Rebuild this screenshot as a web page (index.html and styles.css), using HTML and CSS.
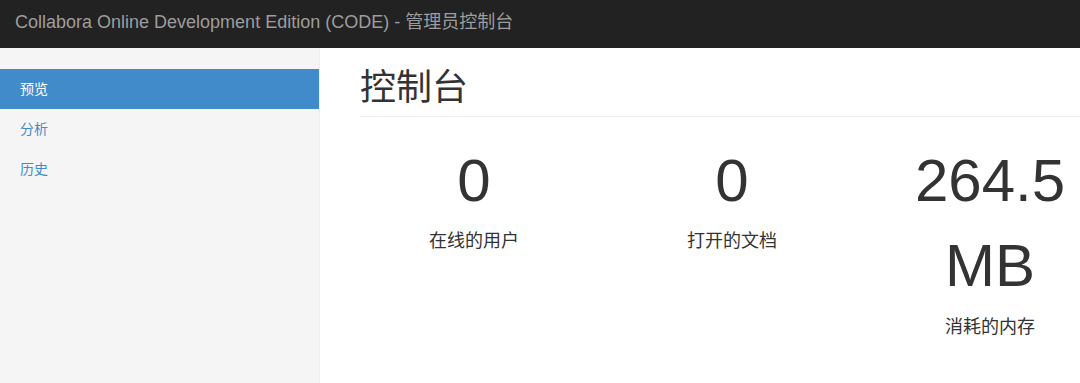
FILE: index.html
```html
<!DOCTYPE html>
<html lang="zh-CN">
<head>
<meta charset="utf-8">
<title>管理员控制台</title>
<link rel="stylesheet" href="styles.css">
</head>
<body>
<header class="navbar">
  <span class="brand">Collabora Online Development Edition (CODE) - 管理员控制台</span>
</header>
<div class="layout">
  <aside class="sidebar">
    <ul class="nav">
      <li class="nav-item active"><a href="#">预览</a></li>
      <li class="nav-item"><a href="#">分析</a></li>
      <li class="nav-item"><a href="#">历史</a></li>
    </ul>
  </aside>
  <main class="main">
    <h1 class="page-header">控制台</h1>
    <div class="stats">
      <div class="stat">
        <div class="stat-value">0</div>
        <h4 class="stat-label">在线的用户</h4>
      </div>
      <div class="stat">
        <div class="stat-value">0</div>
        <h4 class="stat-label">打开的文档</h4>
      </div>
      <div class="stat">
        <div class="stat-value">264.5 MB</div>
        <h4 class="stat-label">消耗的内存</h4>
      </div>
    </div>
  </main>
</div>
</body>
</html>
```

FILE: styles.css
```css
html, body {
  height: 100%;
}
body {
  margin: 0;
  overflow: hidden;
  font-family: "Liberation Sans", "Noto Sans CJK SC", sans-serif;
  font-size: 14px;
  line-height: 1.42857;
  color: #333;
  background: #fff;
  display: flex;
  flex-direction: column;
}
.navbar {
  flex: none;
  height: 48px;
  background: #222;
  padding: 12px 15px 0;
  box-sizing: border-box;
}
.brand {
  display: block;
  font-size: 18px;
  line-height: 20px;
  color: #9d9d9d;
  white-space: nowrap;
}
.layout {
  flex: 1;
  display: flex;
  min-height: 0;
}
.sidebar {
  flex: none;
  width: 319px;
  background: #f5f5f5;
  border-right: 1px solid #eee;
  padding-top: 21px;
}
.nav {
  list-style: none;
  margin: 0;
  padding: 0;
}
.nav-item a {
  display: block;
  padding: 10px 20px;
  line-height: 20px;
  font-size: 14px;
  color: #428bca;
  text-decoration: none;
}
.nav-item.active a {
  background: #428bca;
  color: #fff;
}
.main {
  flex: 1;
  min-width: 0;
  padding: 20px 0 0 40px;
}
.page-header {
  margin: 0 0 21px;
  padding-bottom: 8px;
  border-bottom: 1px solid #eee;
  font-size: 36px;
  font-weight: 400;
  line-height: 1.1;
}
.stats {
  display: grid;
  grid-template-columns: repeat(3, 258px);
  margin: 0 -15px;
}
.stat {
  padding: 0 15px;
  text-align: center;
}
.stat-value {
  font-size: 60px;
  line-height: 1.42857;
}
.stat-label {
  margin: 9px 0 10px;
  font-size: 18px;
  font-weight: 400;
  line-height: 1.1;
  color: #333;
}
```
